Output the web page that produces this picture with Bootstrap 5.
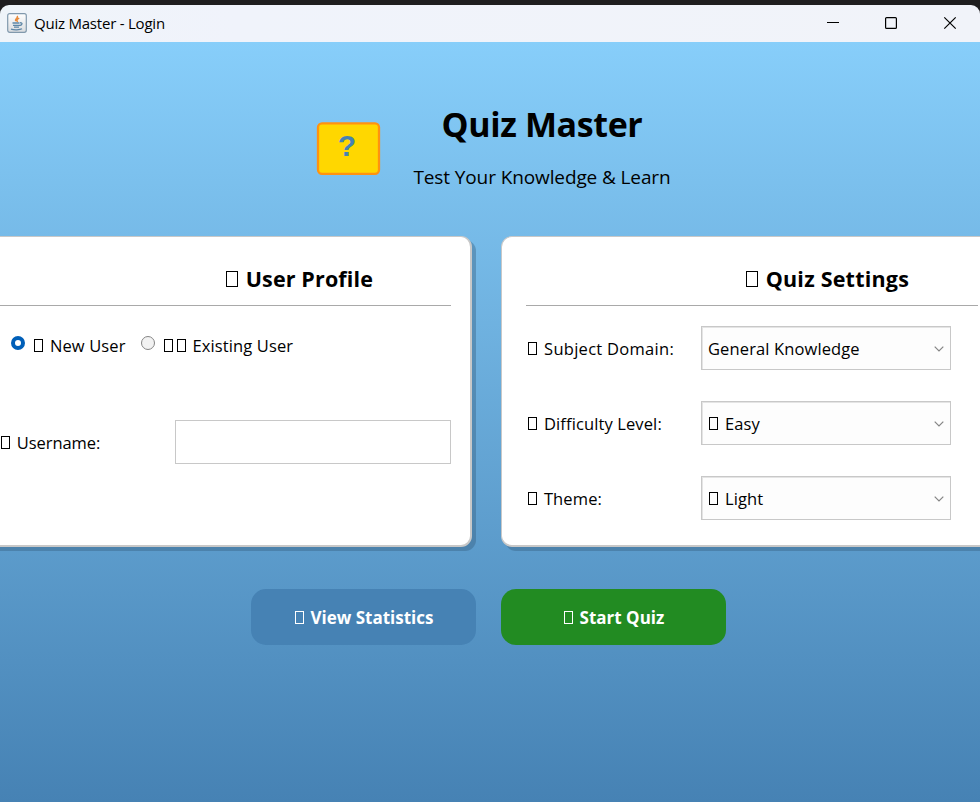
<!DOCTYPE html>
<html lang="en">
<head>
<meta charset="utf-8">
<title>Quiz Master - Login</title>
<link href="https://cdn.jsdelivr.net/npm/bootstrap@5.3.0/dist/css/bootstrap.min.css" rel="stylesheet">
<style>
body{font-family:"Open Sans","Noto Sans",sans-serif;background:#1f1e1f;color:#000;width:980px;height:802px;overflow:hidden;padding-top:5px;line-height:1}
.titlebar{height:37px;background:linear-gradient(90deg,#eff4f9,#f0f3fb 24%,#f1f3f9);border-radius:9px 9px 0 0;padding:0 23px 0 7px}
.titlebar .caption{font-size:15px;letter-spacing:-.22px;margin-left:7px}
.titlebar svg{margin-top:-1px}
.stage{height:760px;background:linear-gradient(#87cefa,#4682b4);overflow:hidden;padding-top:60px}
.hero{height:134px;padding-left:316px}
.logo{margin-top:19px}
.hero-text{width:262px;margin-left:30px}
.hero-title{font-size:34px;font-weight:700;line-height:44px;margin:0;letter-spacing:-.37px}
.hero-sub{font-size:19px;line-height:30px;margin:16px 0 0;letter-spacing:-.11px}
.panels{width:1026px;margin-left:-27px;gap:29px}
.panel{width:499px;height:311px;flex:none;background:#fff;border:1px solid #c8c8c8;border-bottom-width:2px;border-right-width:2px;border-radius:11px;box-shadow:4px 4px 0 rgba(50,90,120,.38);padding:24px 20px 0 24px}
.panel-user{padding:24px 19px 0 26px}
.panel-title{font-size:21.5px;font-weight:700;line-height:36px;height:45px;margin:0;border-bottom:1px solid #a9a9a9;padding-left:148px;text-align:center;white-space:nowrap;letter-spacing:.14px}
.settings-title{padding-left:151px;letter-spacing:.22px}
.field-row{font-size:16.5px;height:44px;white-space:nowrap;letter-spacing:.12px}
.field-label{width:175px}
.field-label,.pick span{padding-top:2px}
.setting .field-label{padding-left:1px}
.wide-label{letter-spacing:.28px}
.username-row{margin-top:54px;letter-spacing:-.06px}
.glyph{display:inline-block;border:1px solid currentColor;width:9px;height:13px;vertical-align:-.5px;margin:0 2.5px 0 1px}
.panel-title .glyph{width:12px;height:16px;margin:0 2px 0 0;vertical-align:0}
.act .glyph{vertical-align:0}
.field-box{height:44px;border:1px solid #c8c8c8;border-radius:0;padding:0 6px}
.pick{width:250px;background:#fdfdfd;box-shadow:inset 1px 1px 0 #e4e4e4}
.pick svg{margin-top:2px}
.radio-dot{width:14px;height:14px;border-radius:50%;border:1px solid #858585;background:#f2f2f2;margin-top:-6px}
.radio-dot.on{border:4.5px solid #005fb8;background:#fff}
.choices{padding-left:11px}
.second-dot{margin-left:15.5px}
.actions{gap:25px;margin:42px 0 0 251px}
.act{width:225px;height:56px;border:0;border-radius:15px;color:#fff;font-size:17px;font-weight:700;padding:2px 0 0;line-height:54px}
.act:hover{color:#fff}
.stats{background:#4682b4}.start{background:#228b22}
</style>
<script src="https://cdn.jsdelivr.net/npm/bootstrap@5.3.0/dist/js/bootstrap.bundle.min.js"></script>
</head>
<body>
<header class="titlebar d-flex align-items-center">
  <svg width="20" height="20" viewBox="0 0 20 20" fill="none"><defs><linearGradient id="tile" x2="0" y2="1"><stop stop-color="#fff"/><stop offset="1" stop-color="#d9dcdf"/></linearGradient></defs><rect x=".7" y=".7" width="18.6" height="18.6" rx="2" fill="url(#tile)" stroke="#8199ad" stroke-width="1.2"/><path d="M10 3c2 2-3 3-1 5 M12.2 5.2c-3 1.6-2.6 2.3-1.6 4" stroke="#e98b3b" stroke-width="1.5"/><path d="M5.5 10h7M6 12.3h6.5M7 14.2h5M4 16.2c3 .9 9 .8 11-.4M13 9.8c3-.4 2.5 2.2-.5 2.7" stroke="#5e86a6" stroke-width="1.3"/></svg>
  <span class="caption">Quiz Master - Login</span>
  <svg class="ms-auto" width="132" height="16" fill="none" stroke="#000" stroke-width="1.2"><path d="M2 7.5h12" stroke-width="1"/><rect x="60.6" y="2.6" width="10.8" height="10.8" rx="1"/><path d="M119.3 2.3l11.4 11.4M130.7 2.3l-11.4 11.4"/></svg>
</header>
<main class="stage">
  <section class="hero d-flex">
    <svg class="logo" width="65" height="56" viewBox="0 0 65 56"><rect x="2" y="2.3" width="61" height="50.5" rx="4" fill="#ffd700" stroke="#ff9210" stroke-width="2.3"/><text x="31" y="35.3" text-anchor="middle" font-family="Liberation Sans,Arial,sans-serif" font-weight="700" font-size="30" fill="#4682b4">?</text></svg>
    <div class="hero-text text-center text-nowrap">
      <h1 class="hero-title">Quiz Master</h1>
      <p class="hero-sub">Test Your Knowledge &amp; Learn</p>
    </div>
  </section>
  <section class="panels d-flex">
    <div class="panel panel-user">
      <h2 class="panel-title"><i class="glyph"></i> User Profile</h2>
      <div class="field-row choices d-flex align-items-center mt-3 pt-1">
        <span class="radio-dot on"></span><span class="ms-2"><i class="glyph"></i> New User</span>
        <span class="radio-dot second-dot"></span><span class="ms-2"><i class="glyph"></i><i class="glyph"></i> Existing User</span>
      </div>
      <div class="field-row username-row d-flex align-items-center">
        <label class="field-label" for="user"><i class="glyph"></i> Username:</label>
        <input id="user" class="field-box flex-grow-1">
      </div>
    </div>
    <div class="panel">
      <h2 class="panel-title settings-title"><i class="glyph"></i> Quiz Settings</h2>
      <div class="d-grid" style="gap:31px;margin-top:20px">
        <div class="field-row setting d-flex align-items-center"><span class="field-label wide-label"><i class="glyph"></i> Subject Domain:</span>
          <div class="field-box pick d-flex align-items-center justify-content-between"><span>General Knowledge</span><svg width="10" height="6" fill="none" stroke="#858585" stroke-width="1.2"><path d="M.7.7L5 5 9.3.7"/></svg></div></div>
        <div class="field-row setting d-flex align-items-center"><span class="field-label"><i class="glyph"></i> Difficulty Level:</span>
          <div class="field-box pick d-flex align-items-center justify-content-between"><span><i class="glyph"></i> Easy</span><svg width="10" height="6" fill="none" stroke="#858585" stroke-width="1.2"><path d="M.7.7L5 5 9.3.7"/></svg></div></div>
        <div class="field-row setting d-flex align-items-center"><span class="field-label"><i class="glyph"></i> Theme:</span>
          <div class="field-box pick d-flex align-items-center justify-content-between"><span><i class="glyph"></i> Light</span><svg width="10" height="6" fill="none" stroke="#858585" stroke-width="1.2"><path d="M.7.7L5 5 9.3.7"/></svg></div></div>
      </div>
    </div>
  </section>
  <div class="actions d-flex">
    <button class="btn act stats"><i class="glyph"></i> View Statistics</button>
    <button class="btn act start"><i class="glyph"></i> Start Quiz</button>
  </div>
</main>
</body>
</html>
